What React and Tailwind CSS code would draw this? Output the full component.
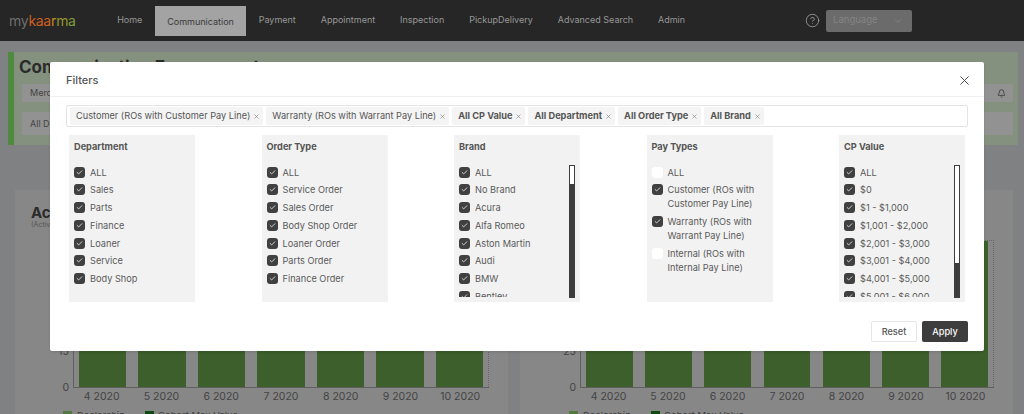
import React from "react";
import { X, Check, ChevronDown, CircleHelp, Bell } from "lucide-react";

const NAV = ["Home", "Communication", "Payment", "Appointment", "Inspection", "PickupDelivery", "Advanced Search", "Admin"];
const MONTHS = ["4 2020", "5 2020", "6 2020", "7 2020", "8 2020", "9 2020", "10 2020"];
const CHIPS = [
  { label: "Customer (ROs with Customer Pay Line)" },
  { label: "Warranty (ROs with Warrant Pay Line)" },
  { label: "All CP Value", bold: true },
  { label: "All Department", bold: true },
  { label: "All Order Type", bold: true },
  { label: "All Brand", bold: true },
];

const FILTERS = [
  { title: "Department", items: ["ALL", "Sales", "Parts", "Finance", "Loaner", "Service", "Body Shop"] },
  { title: "Order Type", items: ["ALL", "Service Order", "Sales Order", "Body Shop Order", "Loaner Order", "Parts Order", "Finance Order"] },
  { title: "Brand", thumb: "h-5", items: ["ALL", "No Brand", "Acura", "Alfa Romeo", "Aston Martin", "Audi", "BMW", "Bentley"] },
  {
    title: "Pay Types",
    items: [
      { label: "ALL", off: true },
      { label: "Customer (ROs with Customer Pay Line)" },
      { label: "Warranty (ROs with Warrant Pay Line)" },
      { label: "Internal (ROs with Internal Pay Line)", off: true },
    ],
  },
  { title: "CP Value", thumb: "h-[99px]", items: ["ALL", "$0", "$1 - $1,000", "$1,001 - $2,000", "$2,001 - $3,000", "$3,001 - $4,000", "$4,001 - $5,000", "$5,001 - $6,000"] },
];

function Chart({ ticks, axisClass, legendClass }) {
  return (
    <div className="h-[224px] flex-1 overflow-hidden bg-[#878787] pt-[15px]">
      <div className="pl-[16px] text-[15px] font-bold leading-[16px] text-[#2b2b2b]">Activity</div>
      <div className="pl-[16px] text-[7px] leading-[8px] text-[#555]">(Active)</div>
      <div className="mt-[11px] flex h-[148px] pr-[19px]">
        <div className={`flex flex-col items-end justify-between pr-[4px] text-[10.5px] leading-[10px] text-[#444] ${axisClass}`}>
          {ticks.map(t => <span key={t} className="last:-mb-[5px]">{t}</span>)}
        </div>
        <div className="flex-1 border-b border-l border-[#5f5f5f]">
          <div className="flex h-full gap-[12.3px] border-t border-r border-dotted border-[#666] px-[5px]">
            {MONTHS.map(m => <div key={m} className="flex-1 bg-[#3c5f2b]" />)}
          </div>
        </div>
      </div>
      <div className="mt-[3px] flex pr-[19px]">
        <div className={axisClass} />
        <div className="flex flex-1 gap-[12.3px] px-[5px]">
          {MONTHS.map(m => <div key={m} className="flex-1 whitespace-nowrap text-center text-[10.5px] leading-[12px] text-[#444]">{m}</div>)}
        </div>
      </div>
      <div className={`mt-[7px] flex items-center text-[9.5px] leading-[12px] text-[#3d3d3d] ${legendClass}`}>
        <span className="h-[10px] w-[9px] bg-[#527a40]" />
        <span className="ml-[5px]">Dealership</span>
        <span className="ml-[20px] h-[10px] w-[9px] bg-[#0f4a12]" />
        <span className="ml-[4px]">Cohort Max Value</span>
      </div>
    </div>
  );
}

function FilterRow({ item }) {
  const label = typeof item === "string" ? item : item.label;
  const off = typeof item === "object" && item.off;
  return (
    <div className="flex items-start gap-[5px] pb-[3.75px] text-[9.2px] leading-[14px] text-[#5a5a5a]">
      <span className={`mt-px flex h-[11px] w-[11px] shrink-0 items-center justify-center rounded-[3px] ${off ? "bg-white" : "bg-[#404040]"}`}>
        {!off && <Check size={7} strokeWidth={3} className="text-[#e8e8e8]" />}
      </span>
      <span>{label}</span>
    </div>
  );
}

function FilterColumn({ filter }) {
  return (
    <div className="relative h-[167px] w-[126px] overflow-hidden bg-[#f2f2f2] pl-[5px] pr-[14px] pt-[5px]">
      <div className="text-[9.2px] font-bold leading-[14px] text-[#555]">{filter.title}</div>
      <div className="mt-[11.5px] h-[131.5px] overflow-hidden">
        {filter.items.map(item => <FilterRow key={typeof item === "string" ? item : item.label} item={item} />)}
      </div>
      {filter.thumb && (
        <div className="absolute right-[5px] top-[30px] h-[133px] w-[6px] bg-[#3d3d3d]">
          <div className={`${filter.thumb} border border-[#3d3d3d] bg-white`} />
        </div>
      )}
    </div>
  );
}

export default function App() {
  return (
    <div className="relative h-[414px] w-[1024px] overflow-hidden bg-[#808183] font-['Inter',sans-serif]">
      <nav className="flex h-[41px] items-center bg-[#262626] pl-[9px] text-[9px] text-[#979797]">
        <div className="w-[95.7px] text-[14px] leading-none tracking-[-0.3px]">
          <span className="text-[#6e6e6e]">my</span><span className="text-[#cf5f1f]">kaa</span><span className="text-[#b98f24]">r</span><span className="text-[#94962c]">m</span><span className="text-[#7d9c3a]">a</span>
        </div>
        <div className="flex h-full items-start">
          {NAV.map(n => (
            <div
              key={n}
              className={n === "Communication"
                ? "mt-[6px] flex h-[30px] items-center whitespace-nowrap bg-[#a3a3a3] px-[12.4px] pt-px text-[#3a3a3a]"
                : "flex h-[39px] items-center whitespace-nowrap px-[12.45px]"}
            >
              {n}
            </div>
          ))}
        </div>
        <CircleHelp size={15} strokeWidth={1.3} className="ml-[107.5px] text-[#a3a3a3]" />
        <div className="ml-[6px] flex h-[22px] w-[86px] items-center justify-between rounded-[2px] bg-[#6b6b6b] pl-[7px] pr-[9px] text-[9.5px] text-[#858585]">
          Language <ChevronDown size={10} />
        </div>
      </nav>

      <div className="ml-[8px] mr-[6px] mt-[11px] h-[93px] border-l-[6px] border-[#4f8a3e] bg-[#84917f] pr-[5px] pt-[5px]">
        <div className="pl-[5px] text-[17px] font-bold leading-[20px] whitespace-nowrap text-[#2b2b2b]">Communication Engagement</div>
        <div className="ml-[8px] mt-[7px] flex h-[18px] items-center justify-between bg-[#929292] pl-[8px] pr-[7px] text-[9px] text-[#444]">
          <span>Mercedes</span>
          <Bell size={9} className="text-[#333]" />
        </div>
        <div className="ml-[8px] mt-[10px] flex h-[23px] items-center bg-[#929292] pl-[8px] text-[9px] text-[#444]">All Dealers</div>
      </div>

      <div className="ml-[15px] mr-[11px] mt-[45px] flex gap-[12px]">
        <Chart ticks={[60, 45, 30, 15, 0]} axisClass="w-[58px]" legendClass="pl-[48px]" />
        <Chart ticks={[100, 75, 50, 25, 0]} axisClass="w-[60px]" legendClass="pl-[49px]" />
      </div>

      <div className="absolute left-[50px] top-[62px] h-[289px] w-[934px] rounded-[2px] bg-white shadow-sm">
        <div className="flex h-[35px] items-center justify-between border-b border-[#f0f0f0] pl-[16px] pr-[12px] pt-[2px] text-[11px] font-medium text-[#555]">
          Filters
          <X size={15} strokeWidth={1.5} className="text-[#444]" />
        </div>
        <div className="mx-[16px] mt-[8px] flex h-[22px] items-center gap-[3px] rounded-[2px] border border-[#e4e4e4] px-[3px]">
          {CHIPS.map(c => (
            <span key={c.label} className={`flex h-[18px] items-center gap-[3px] whitespace-nowrap rounded-[2px] bg-[#f4f4f4] pl-[6px] pr-[3px] text-[9.2px] text-[#555] ${c.bold ? "font-bold" : ""}`}>
              {c.label}
              <X size={7} strokeWidth={2} className="text-[#777]" />
            </span>
          ))}
        </div>
        <div className="mx-[19px] mt-[8px] flex justify-between">
          {FILTERS.map(f => <FilterColumn key={f.title} filter={f} />)}
        </div>
        <div className="mr-[16px] mt-[19px] flex justify-end gap-[5px] text-[9.2px] font-medium">
          <button className="h-[21px] w-[46px] rounded-[2px] border border-[#e6e6e6] bg-white text-[#555]">Reset</button>
          <button className="h-[21px] w-[46px] rounded-[2px] bg-[#3d3d3d] text-white">Apply</button>
        </div>
      </div>
    </div>
  );
}
